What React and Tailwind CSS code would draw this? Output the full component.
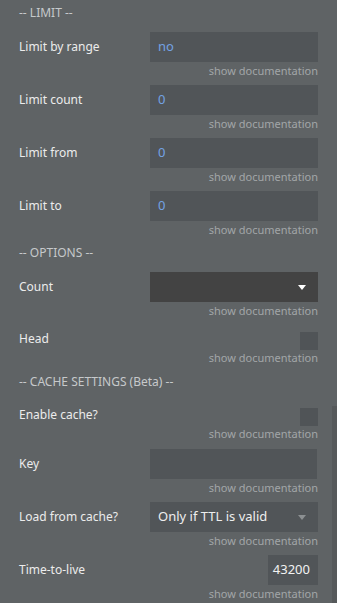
import React from "react";

const font = { fontFamily: '"Noto Sans", "Open Sans", sans-serif' };

function Doc() {
  return (
    <div className="h-[18px] text-right pr-[19px] text-[11px] leading-[18px] text-[#a2a6a8]">
      show documentation
    </div>
  );
}

function Label({ children }) {
  return <div className="w-[131px] text-[12px] text-[#ececec]">{children}</div>;
}

function InputRow({ label, value, blue = true, last }) {
  return (
    <div className={last ? "" : "mb-[5px]"}>
      <div className="flex items-center h-[30px] pl-[19px]">
        <Label>{label}</Label>
        <div
          className={`w-[168px] h-[30px] bg-[#515558] pl-[8px] flex items-center text-[13px] ${
            blue ? "text-[#73a2e3]" : "text-[#eeeeee]"
          }`}
        >
          {value}
        </div>
      </div>
      <Doc />
    </div>
  );
}

function Arrow({ color }) {
  return (
    <svg width="8" height="5" viewBox="0 0 8 5" className="mr-[12px]">
      <path d="M0 0 L8 0 L4 5 Z" fill={color} />
    </svg>
  );
}

function CheckRow({ label }) {
  return (
    <div>
      <div className="flex items-start h-[24px] pl-[19px] pr-[19px] justify-between">
        <div className="text-[12px] leading-[28px] text-[#ececec]">{label}</div>
        <div className="w-[18px] h-[18px] mt-[7px] bg-[#505457]" />
      </div>
      <Doc />
    </div>
  );
}

function Header({ children, top = "mt-0" }) {
  return (
    <div className={`${top} mb-[10px] h-[18px] pl-[19px] text-[12px] leading-[18px] text-[#c6c9cb]`}>
      {children}
    </div>
  );
}

export default function App() {
  return (
    <div style={font} className="relative w-[337px] h-[603px] overflow-hidden bg-[#5f6365] pt-[4px]">
      <Header>-- LIMIT --</Header>
      <InputRow label="Limit by range" value="no" />
      <InputRow label="Limit count" value="0" />
      <InputRow label="Limit from" value="0" />
      <InputRow label="Limit to" value="0" last />
      <Header top="mt-[5px]">-- OPTIONS --</Header>
      <div className="mb-[5px]">
        <div className="flex items-center h-[30px] pl-[19px]">
          <Label>Count</Label>
          <div className="w-[168px] h-[30px] bg-[#434343] flex items-center justify-end">
            <Arrow color="#ffffff" />
          </div>
        </div>
        <Doc />
      </div>
      <CheckRow label="Head" />
      <Header top="mt-[6px]">-- CACHE SETTINGS (Beta) --</Header>
      <div className="mb-[6px]">
        <CheckRow label="Enable cache?" />
      </div>
      <div className="mb-[5px]">
        <div className="flex items-center h-[30px] pl-[19px]">
          <Label>Key</Label>
          <div className="w-[167px] h-[30px] bg-[#515558]" />
        </div>
        <Doc />
      </div>
      <div className="mb-[5px]">
        <div className="flex items-center h-[30px] pl-[19px]">
          <Label>Load from cache?</Label>
          <div className="w-[168px] h-[30px] bg-[#515558] pl-[8px] flex items-center justify-between text-[13px] text-[#eeeeee]">
            <span>Only if TTL is valid</span>
            <Arrow color="#8c9092" />
          </div>
        </div>
        <Doc />
      </div>
      <div>
        <div className="flex items-center h-[30px] pl-[19px] pr-[19px] justify-between">
          <div className="text-[12px] text-[#ececec]">Time-to-live</div>
          <div className="w-[50px] h-[30px] bg-[#515558] pr-[8px] flex items-center justify-end text-[13px] text-[#f2f2f2]">
            43200
          </div>
        </div>
        <Doc />
      </div>
      <div className="absolute right-0 top-[406px] w-[5px] h-[197px] bg-[#56595b]" />
    </div>
  );
}
